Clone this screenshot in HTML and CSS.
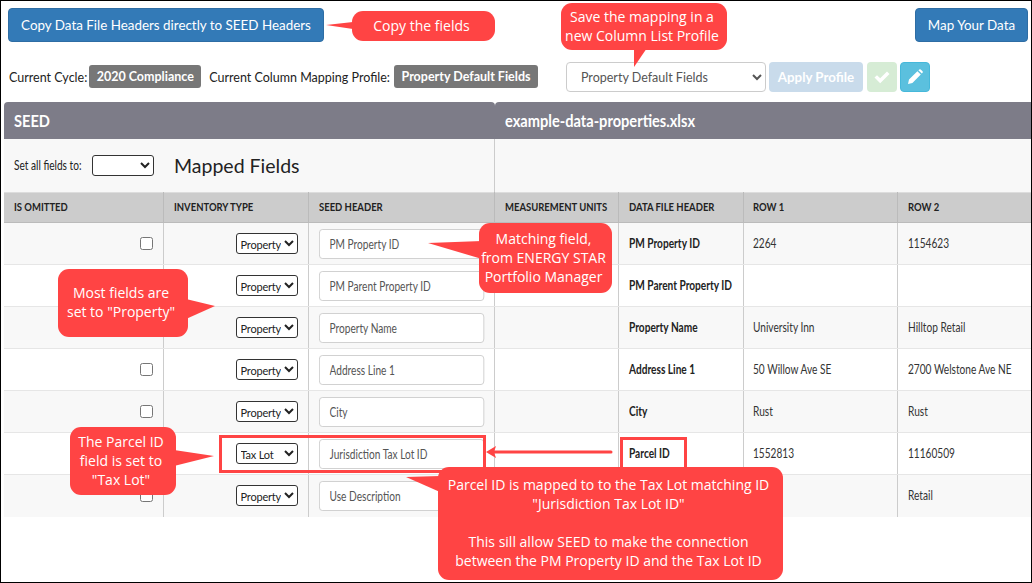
FILE: index.html
```html
<!DOCTYPE html>
<html lang="en">
<head>
<meta charset="utf-8">
<title>Map Your Data</title>
<link rel="stylesheet" href="styles.css">
</head>
<body>
<div class="frame">
  <div class="top-row">
    <button class="btn btn-primary btn-copy">Copy Data File Headers directly to SEED Headers</button>
    <button class="btn btn-primary btn-map">Map Your Data</button>
  </div>
  <div class="status-row">
    <span class="label">Current Cycle:</span>
    <span class="badge badge-cycle">2020 Compliance</span>
    <span class="label label-profile">Current Column Mapping Profile:</span>
    <span class="badge badge-profile">Property Default Fields</span>
    <select class="profile-select"><option>Property Default Fields</option></select>
    <button class="btn btn-apply">Apply Profile</button>
    <button class="btn btn-icon btn-save" aria-label="Save">
      <svg viewBox="0 0 16 16" width="16" height="16"><path d="M0.5 8.6 L3 6.2 L6.2 9.3 L13 2.6 L15.5 5 L6.2 14.2 Z" fill="#fff"/></svg>
    </button>
    <button class="btn btn-icon btn-edit" aria-label="Edit">
      <svg viewBox="0 0 16 16" width="16" height="16"><path d="M1 15 L2 10.6 L10.4 2.2 L13.8 5.6 L5.4 14 Z M11.4 1.2 L12.3 0.4 Q13 0 13.7 0.4 L15.6 2.3 Q16 3 15.6 3.7 L14.8 4.6 Z" fill="#fff"/></svg>
    </button>
  </div>
  <div class="bar">
    <div class="bar-seed"><span class="narrow-bar">SEED</span></div>
    <div class="bar-file"><span class="narrow-bar">example-data-properties.xlsx</span></div>
  </div>
  <div class="sub-head">
    <div class="sub-left">
      <label class="set-all"><span class="narrow">Set all fields to:</span></label>
      <select class="inv inv-empty"><option></option></select>
      <h2 class="mapped">Mapped Fields</h2>
    </div>
  </div>
  <table class="grid">
    <colgroup>
      <col class="c1"><col class="c2"><col class="c3"><col class="c4"><col class="c5"><col class="c6"><col class="c7">
    </colgroup>
    <thead>
      <tr><th><span class="narrow-th">IS OMITTED</span></th><th><span class="narrow-th">INVENTORY TYPE</span></th><th><span class="narrow-th">SEED HEADER</span></th><th><span class="narrow-th">MEASUREMENT UNITS</span></th><th><span class="narrow-th">DATA FILE HEADER</span></th><th><span class="narrow-th">ROW 1</span></th><th><span class="narrow-th">ROW 2</span></th></tr>
    </thead>
    <tbody>
      <tr><td class="chk"><input type="checkbox"></td><td class="type"><select class="inv"><option>Property</option></select></td><td><input class="seed" value="PM Property ID"></td><td></td><td class="dfh"><span class="narrow">PM Property ID</span></td><td><span class="narrow">2264</span></td><td><span class="narrow">1154623</span></td></tr>
      <tr><td class="chk"><input type="checkbox"></td><td class="type"><select class="inv"><option>Property</option></select></td><td><input class="seed" value="PM Parent Property ID"></td><td></td><td class="dfh"><span class="narrow">PM Parent Property ID</span></td><td></td><td></td></tr>
      <tr><td class="chk"><input type="checkbox"></td><td class="type"><select class="inv"><option>Property</option></select></td><td><input class="seed" value="Property Name"></td><td></td><td class="dfh"><span class="narrow">Property Name</span></td><td><span class="narrow">University Inn</span></td><td><span class="narrow">Hilltop Retail</span></td></tr>
      <tr><td class="chk"><input type="checkbox"></td><td class="type"><select class="inv"><option>Property</option></select></td><td><input class="seed" value="Address Line 1"></td><td></td><td class="dfh"><span class="narrow">Address Line 1</span></td><td><span class="narrow">50 Willow Ave SE</span></td><td><span class="narrow">2700 Welstone Ave NE</span></td></tr>
      <tr><td class="chk"><input type="checkbox"></td><td class="type"><select class="inv"><option>Property</option></select></td><td><input class="seed" value="City"></td><td></td><td class="dfh"><span class="narrow">City</span></td><td><span class="narrow">Rust</span></td><td><span class="narrow">Rust</span></td></tr>
      <tr><td class="chk"><input type="checkbox"></td><td class="type"><select class="inv"><option>Tax Lot</option></select></td><td><input class="seed" value="Jurisdiction Tax Lot ID"></td><td></td><td class="dfh"><span class="narrow">Parcel ID</span></td><td><span class="narrow">1552813</span></td><td><span class="narrow">11160509</span></td></tr>
      <tr><td class="chk"><input type="checkbox"></td><td class="type"><select class="inv"><option>Property</option></select></td><td><input class="seed" value="Use Description"></td><td></td><td class="dfh"></td><td></td><td><span class="narrow">Retail</span></td></tr>
    </tbody>
  </table>
</div>

<svg class="marks" viewBox="0 0 1032 583" width="1032" height="583" aria-hidden="true">
  <rect x="220.5" y="436.5" width="264" height="35" class="outline"/>
  <rect x="621.5" y="438.5" width="64" height="36" class="outline"/>
  <path d="M611 452 H490" class="line"/>
  <path d="M486 452 L496 446 L494 452 L496 458 Z" class="fill"/>
  <path d="M326 25 L353 22 V29 Z" class="fill"/>
  <path d="M634 67 L634 48 H647 Z" class="fill"/>
  <path d="M428 243 L482 241 V259 Z" class="fill"/>
  <path d="M215 306 L186 299 V319 Z" class="fill"/>
  <path d="M214 456 L174 450 V466 Z" class="fill"/>
  <path d="M406 477 L440 476 V492 Z" class="fill"/>
</svg>

<div class="note note-copy">Copy the fields</div>
<div class="note note-save">Save the mapping in a<br>new Column List Profile</div>
<div class="note note-match">Matching field,<br>from ENERGY STAR<br>Portfolio Manager</div>
<div class="note note-most">Most fields are<br>set to "Property"</div>
<div class="note note-parcel">The Parcel ID<br>field is set to<br>"Tax Lot"</div>
<div class="note note-map">Parcel ID is mapped to to the Tax Lot matching ID<br>"Jurisdiction Tax Lot ID"<br><br>This sill allow SEED to make the connection<br>between the PM Property ID and the Tax Lot ID</div>
</body>
</html>
```
FILE: styles.css
```css
* { box-sizing: border-box; }
html, body { margin: 0; padding: 0; background: #fff; }
body { width: 1032px; height: 583px; overflow: hidden; position: relative; font-family: "Lato", "Liberation Sans", sans-serif; color: #222; }
.frame { width: 1032px; height: 583px; border: 1px solid #000; padding: 7px 0 0 3px; overflow: hidden; }

.top-row { display: flex; justify-content: space-between; padding: 0 3px 0 4px; }
.btn { border: 1px solid transparent; border-radius: 4px; font-family: "Lato", sans-serif; font-size: 13.4px; color: #fff; padding: 0; margin: 0; }
.btn-primary { background: #337ab7; border-color: #2e6da4; height: 34px; }
.btn-copy { width: 316px; }
.btn-map { width: 113px; }

.status-row { display: flex; align-items: center; margin-top: 19px; height: 31px; padding-left: 5px; font-size: 12.5px; }
.label { color: #222; white-space: nowrap; padding-top: 1px; }
.badge { background: #777; color: #fff; font-weight: 700; font-size: 12.5px; border-radius: 3px; height: 23px; line-height: 23px; text-align: center; white-space: nowrap; }
.badge-cycle { width: 112px; margin-left: 2px; }
.label-profile { margin-left: 8px; }
.badge-profile { width: 144px; margin-left: 4px; }
.profile-select { width: 200px; height: 30px; margin-left: 28px; border: 1px solid #ccc; border-radius: 4px; background: #fff; color: #555; font-family: "Lato", sans-serif; font-size: 12.5px; padding: 2px 0 0 10px; }
.btn-apply { width: 94px; height: 30px; margin-left: 3px; background: #c9dbeb; font-weight: 700; font-size: 13.3px; }
.btn-icon { width: 30px; height: 30px; display: flex; align-items: center; justify-content: center; }
.btn-save { margin-left: 4px; background: #d6ecd5; }
.btn-edit { margin-left: 3px; background: #5bc0de; border-color: #46b8da; }

.bar { display: flex; height: 37px; margin-top: 10px; color: #fff; font-weight: 700; font-size: 17px; line-height: 37px; }
.bar-seed { width: 491px; padding-left: 10px; background: #7d7c88; border-radius: 4px 4px 0 0; }
.bar-file { flex: 1; padding-left: 10px; background: #7d7c88; border-radius: 4px 0 0 0; }
.narrow-bar { display: inline-block; transform: scaleX(.86); transform-origin: left center; }
.narrow { display: inline-block; transform: scaleX(.81); transform-origin: left center; white-space: nowrap; }
.narrow-th { display: inline-block; transform: scaleX(.79); transform-origin: left center; white-space: nowrap; }

.sub-head { height: 53px; background: #f8f8f8; }
.sub-left { width: 491px; height: 53px; border-right: 1px solid #ccc; display: flex; align-items: center; padding-left: 10px; }
.set-all { flex: none; width: 78px; font-size: 12.5px; overflow: visible; }
.mapped { margin: 0 0 0 20px; font-weight: 400; font-size: 19.5px; color: #222; font-family: "Lato", sans-serif; }

.grid { border-collapse: collapse; table-layout: fixed; width: 1028px; font-size: 12.5px; }
.c1 { width: 159px; } .c2 { width: 145px; } .c3 { width: 186px; } .c4 { width: 124px; } .c5 { width: 125px; } .c6 { width: 154px; } .c7 { width: 135px; }
.grid th { height: 30px; background: #ccc; border-right: 1px solid #bbb; border-top: 1px solid #ddd; border-bottom: 1px solid #bbb; text-align: left; padding: 0 0 2px 10px; font-size: 12px; font-weight: 700; color: #222; white-space: nowrap; }
.grid td { height: 42px; padding: 0 0 0 10px; border-right: 1px solid #ccc; border-bottom: 1px solid #e6e6e6; white-space: nowrap; color: #333; }
.grid th:nth-child(6), .grid td:nth-child(6) { padding-left: 9px; }
.grid tbody tr:nth-child(odd) td { background: #f8f8f8; }
.grid tbody tr:nth-child(even) td { background: #fff; }
.grid tbody tr:last-child td { border-bottom: 0; }
.grid td.chk { padding: 0 10px 0 0; }
.chk input { display: block; margin: 0 0 0 auto; }
.grid td.type { text-align: right; padding: 0 10px 0 0; }
.inv { width: 62px; height: 21px; font-family: "Lato", sans-serif; font-size: 11px; letter-spacing: -0.2px; border: 1px solid #333; border-radius: 3px; background: #fff; color: #222; padding: 1px 0 0; vertical-align: middle; }
.seed { width: 204px; height: 30px; border: 1px solid #ccc; border-radius: 4px; padding: 2px 12px 0; font-family: "Lato", sans-serif; font-size: 12.5px; color: #555; background: #fff; vertical-align: middle; transform: scaleX(.81); transform-origin: left center; }
.grid td.dfh { font-weight: 700; color: #222; }

.marks { position: absolute; left: 0; top: 0; pointer-events: none; }
.outline { fill: none; stroke: #ff4444; stroke-width: 3; }
.line { fill: none; stroke: #ff4444; stroke-width: 3; stroke-linecap: round; }
.fill { fill: #ff4444; }

.note { position: absolute; background: #ff4444; color: #fff; border-radius: 11px; text-align: center; font-family: "Open Sans", sans-serif; font-size: 14px; line-height: 19px; display: flex; align-items: center; justify-content: center; white-space: nowrap; padding: 0 4px 2px 0; }
.note-copy { left: 352px; top: 11px; width: 143px; height: 30px; }
.note-save { left: 561px; top: 3px; width: 166px; height: 47px; }
.note-match { left: 479px; top: 223px; width: 133px; height: 70px; }
.note-most { left: 58px; top: 269px; width: 130px; height: 68px; }
.note-parcel { left: 70px; top: 427px; width: 106px; height: 68px; }
.note-map { left: 438px; top: 467px; width: 345px; height: 113px; }
```
